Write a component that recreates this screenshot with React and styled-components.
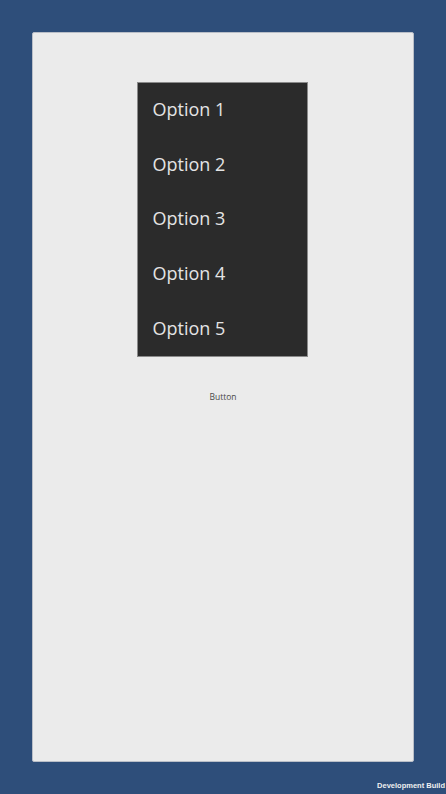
import styled, { createGlobalStyle } from "styled-components";

const Global = createGlobalStyle`
    html, body {
        margin: 0;
        padding: 0;
        background: #2e4e7a;
    }
`

const Screen = styled.div`
    width: 446px;
    height: 794px;
    box-sizing: border-box;
    padding: 32px 32px 0 32px;
    display: flex;
    flex-direction: column;
    font-family: "Open Sans", sans-serif;
`

const Panel = styled.div`
    height: 730px;
    background: #ebebeb;
    border: 1px solid #b9bec7;
    border-radius: 2px;
    box-sizing: border-box;
    display: flex;
    flex-direction: column;
    align-items: center;
    padding-top: 49px;
`

const Menu = styled.ul`
    list-style: none;
    margin: 0;
    padding: 0;
    width: 171px;
    box-sizing: border-box;
    background: #2b2b2b;
    border: 1px solid #8a8a8a;
    margin-left: -2px;
`

const Item = styled.li`
    height: 54.6px;
    display: flex;
    align-items: center;
    padding-left: 15px;
    padding-bottom: 2px;
    box-sizing: border-box;
    color: #e4e4e4;
    font-size: 18px;
`

const TextButton = styled.div`
    margin-top: 34px;
    font-family: "Open Sans", sans-serif;
    font-size: 8.5px;
    color: #4a4a4a;
`

const Footer = styled.div`
    display: flex;
    justify-content: flex-end;
    margin-right: -31px;
    margin-top: 19px;
    font-family: "Liberation Sans", sans-serif;
    font-weight: bold;
    font-size: 7.5px;
    color: #f0f0f0;
`

const options = ["Option 1", "Option 2", "Option 3", "Option 4", "Option 5"];

const App = () => {
    return (
        <>
            <Global />
            <Screen>
                <Panel>
                    <Menu>
                        {options.map(o => <Item key={o}>{o}</Item>)}
                    </Menu>
                    <TextButton>Button</TextButton>
                </Panel>
                <Footer>Development Build</Footer>
            </Screen>
        </>
    )
}

export default App;
